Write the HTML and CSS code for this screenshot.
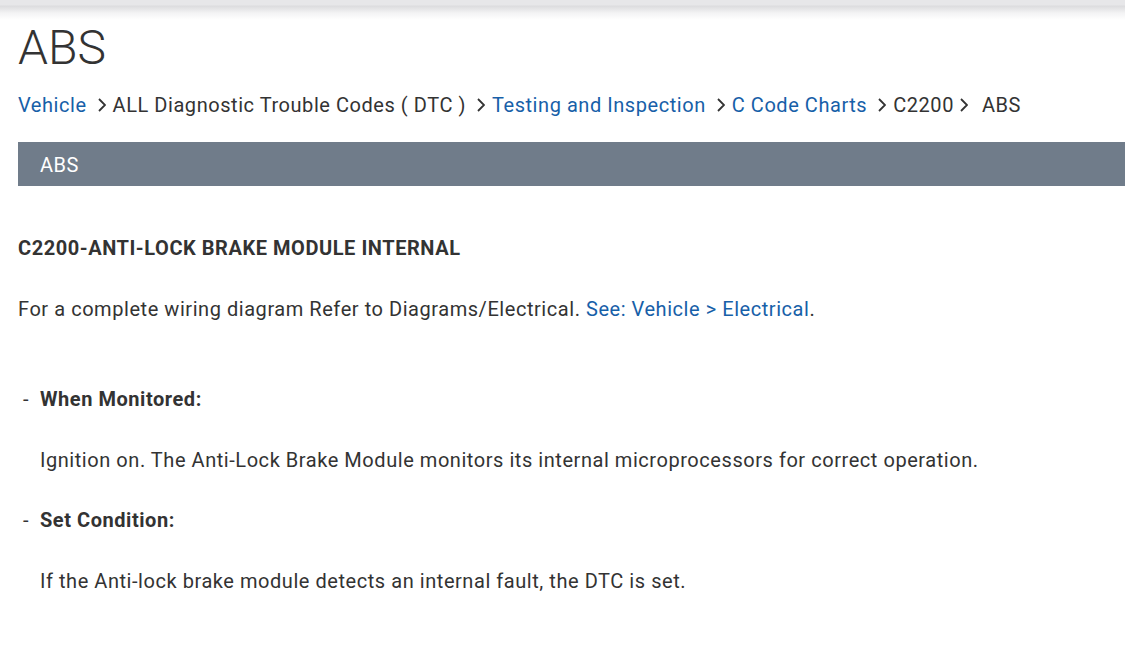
FILE: index.html
```html
<!DOCTYPE html>
<html>
<head>
<meta charset="utf-8">
<link rel="stylesheet" href="styles.css">
</head>
<body>
<div class="topbar"></div>
<main class="page">
  <h1 class="title">ABS</h1>
  <nav class="crumbs">
    <a class="link" href="#">Vehicle</a>
    <svg class="chev" viewBox="0 0 8 14"><path d="M1 1 L7 7 L1 13" /></svg>
    <span>ALL Diagnostic Trouble Codes ( DTC )</span>
    <svg class="chev" viewBox="0 0 8 14"><path d="M1 1 L7 7 L1 13" /></svg>
    <a class="link" href="#">Testing and Inspection</a>
    <svg class="chev" viewBox="0 0 8 14"><path d="M1 1 L7 7 L1 13" /></svg>
    <a class="link" href="#">C Code Charts</a>
    <svg class="chev" viewBox="0 0 8 14"><path d="M1 1 L7 7 L1 13" /></svg>
    <span>C2200</span>
    <svg class="chev chev-tight" viewBox="0 0 8 14"><path d="M1 1 L7 7 L1 13" /></svg>
    <span class="last">ABS</span>
  </nav>
  <div class="band">ABS</div>
  <h2 class="code">C2200-ANTI-LOCK BRAKE MODULE INTERNAL</h2>
  <p class="para">For a complete wiring diagram Refer to Diagrams/Electrical. <a class="link" href="#">See: Vehicle &gt; Electrical</a>.</p>
  <ul class="items">
    <li class="item">
      <div class="item-head"><span class="dash">-</span><strong>When Monitored:</strong></div>
      <p class="item-text">Ignition on. The Anti-Lock Brake Module monitors its internal microprocessors for correct operation.</p>
    </li>
    <li class="item">
      <div class="item-head"><span class="dash">-</span><strong>Set Condition:</strong></div>
      <p class="item-text">If the Anti-lock brake module detects an internal fault, the DTC is set.</p>
    </li>
  </ul>
</main>
</body>
</html>
```
FILE: styles.css
```css
* { box-sizing: border-box; }
html, body { margin: 0; padding: 0; background: #fff; }
body {
  font-family: Roboto, "Liberation Sans", sans-serif;
  color: #333;
  overflow: hidden;
  letter-spacing: 0.55px;
}
.topbar {
  height: 20px;
  background: linear-gradient(to bottom, #e7e7e9 0, #e7e7e9 5px, #dcdcde 6px, #f3f3f4 13px, #ffffff 20px);
}
.page {
  padding-left: 18px;
}
.title {
  margin: 0;
  font-size: 48px;
  font-weight: 300;
  line-height: 56px;
  color: #333;
  height: 56px;
  letter-spacing: 0;
}
.crumbs {
  display: flex;
  align-items: center;
  font-size: 20px;
  line-height: 24px;
  margin-top: 17px;
  color: #333;
  white-space: nowrap;
}
.link { color: #1760a8; text-decoration: none; }
.chev {
  width: 8px;
  height: 14px;
  margin: 0 7px 0 11px;
  fill: none;
  stroke: #333;
  stroke-width: 1.8;
  flex: none;
}
.chev-tight { margin-left: 6px; }
.last { margin-left: 7px; }
.band {
  margin-top: 25px;
  height: 44px;
  background: #707c8a;
  color: #fff;
  font-size: 20px;
  line-height: 46px;
  padding-left: 22px;
}
.code {
  margin: 50px 0 0;
  font-size: 20px;
  font-weight: 700;
  line-height: 24px;
  color: #333;
}
.para {
  margin: 37px 0 0;
  font-size: 20px;
  line-height: 24px;
}
.items {
  list-style: none;
  margin: 66px 0 0;
  padding: 0;
}
.item-head {
  display: flex;
  font-size: 20px;
  line-height: 24px;
}
.dash { width: 22px; padding-left: 5px; }
.item-text {
  margin: 37px 0 36px 22px;
  font-size: 20px;
  line-height: 24px;
}
```
